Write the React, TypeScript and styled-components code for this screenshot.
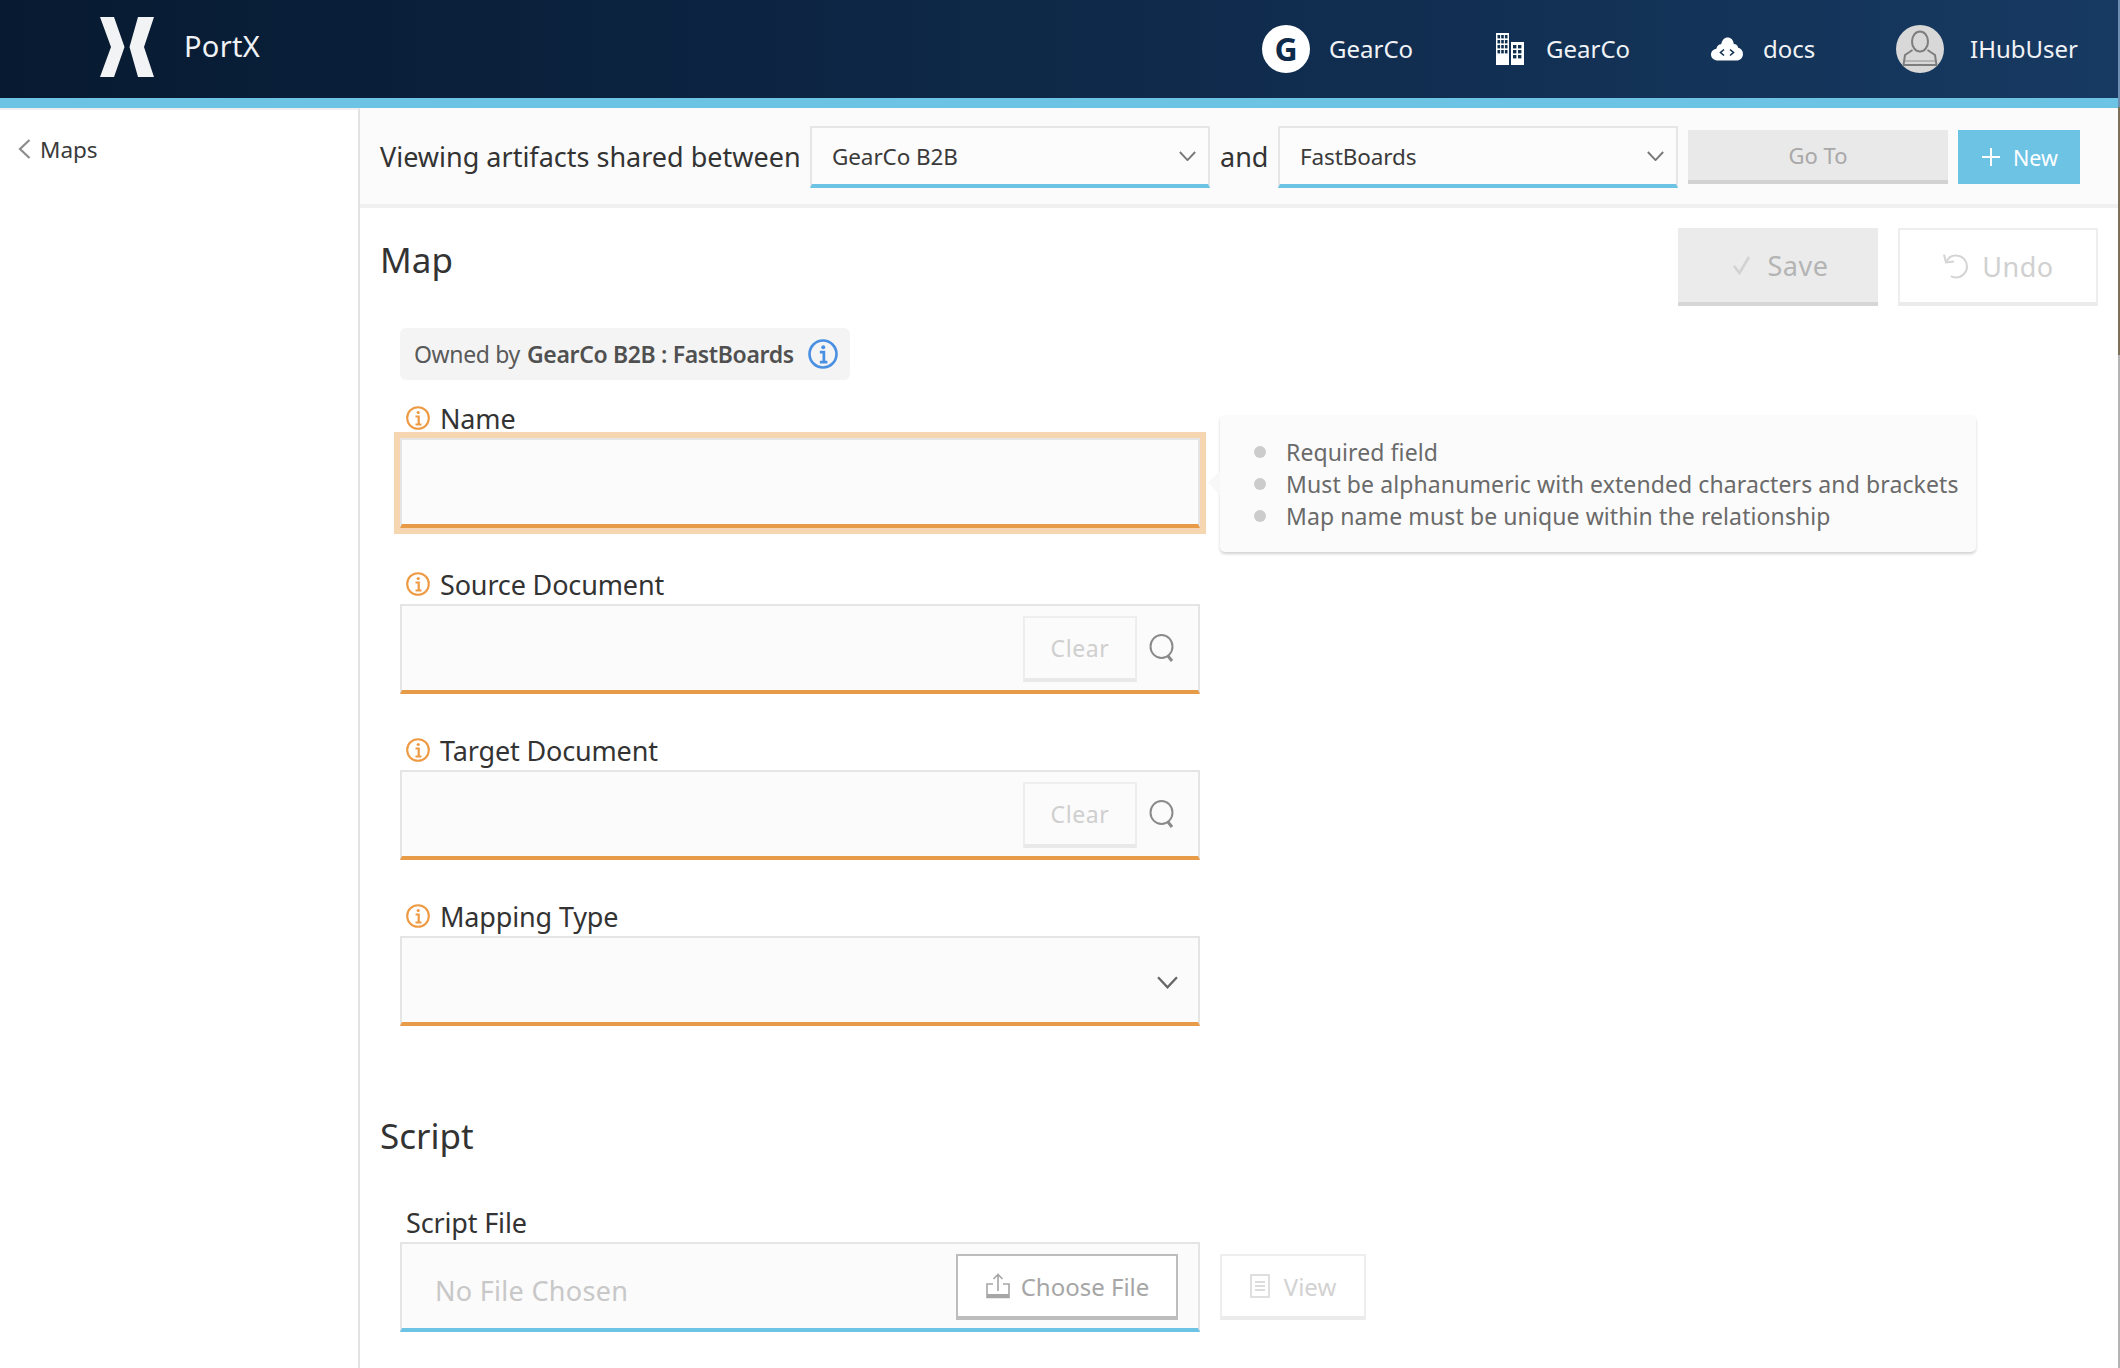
import React from 'react'
import styled, { createGlobalStyle } from 'styled-components'

const GlobalStyle = createGlobalStyle`
  html, body {
    margin: 0;
    padding: 0;
    background: #fff;
  }
  body {
    font-family: "Noto Sans", "Open Sans", sans-serif;
    color: #333;
  }
  * {
    box-sizing: border-box;
  }
`

const Page = styled.div`
  position: relative;
  width: 2120px;
  height: 1368px;
  overflow: hidden;
  display: flex;
  flex-direction: column;

  /* sliver of the desktop behind the browser window */
  &::after {
    content: '';
    position: absolute;
    top: 0;
    right: 0;
    bottom: 0;
    width: 2px;
    background: linear-gradient(180deg, #6f8fb2 0, #6f8fb2 107px, #7d6f58 107px, #7d6f58 355px, #b4b4b4 355px);
  }
`

const Header = styled.header`
  flex: none;
  height: 108px;
  border-bottom: 10px solid #6cc3e4;
  background: linear-gradient(90deg, #071a31 0%, #0f2a4b 55%, #173a62 100%);
  display: flex;
  align-items: center;
  color: #f0f2f5;
`

const LogoBox = styled.div`
  margin-left: 100px;
  width: 84px;
  height: 60px;
  flex: none;
  margin-top: -4px;
`

const Brand = styled.div`
  font-size: 29px;
  flex: 1;
  margin-top: -7px;
  letter-spacing: 0.3px;
`

const NavItem = styled.div<{ $width: number }>`
  display: flex;
  align-items: center;
  flex: none;
  width: ${(p) => p.$width}px;
  height: 48px;
  font-size: 24px;
  line-height: 46px;
`

const NavIcon = styled.span<{ $width: number }>`
  display: flex;
  align-items: center;
  flex: none;
  width: ${(p) => p.$width}px;
`

const CircleG = styled.span`
  width: 48px;
  height: 48px;
  border-radius: 50%;
  background: #fff;
  color: #0f2b4c;
  font-size: 32px;
  font-weight: 700;
  display: flex;
  align-items: center;
  justify-content: center;
`

const Body = styled.div`
  flex: 1;
  display: flex;
  min-height: 0;
`

const Sidebar = styled.aside`
  flex: none;
  width: 360px;
  border-right: 2px solid #e2e2e2;
  border-top: 2px solid #efefef;
  padding: 25px 0 0 18px;
`

const BackLink = styled.div`
  display: flex;
  align-items: center;
  gap: 9px;
  height: 28px;
  font-size: 22.5px;
  color: #3a3a3a;
`

const Main = styled.main`
  flex: 1;
  min-width: 0;
`

const Toolbar = styled.div`
  height: 100px;
  background: #fbfbfb;
  border-bottom: 4px solid #f0f0f0;
  padding-left: 20px;
  display: flex;
  align-items: center;
  font-size: 27px;
  color: #333;
`

const ToolbarText = styled.span<{ $width: number; $inset?: number }>`
  flex: none;
  width: ${(p) => p.$width}px;
  padding-left: ${(p) => p.$inset ?? 0}px;
  white-space: nowrap;
`

const SelectBox = styled.div`
  flex: none;
  width: 400px;
  height: 62px;
  margin-top: 2px;
  border: 2px solid #e6e6e6;
  border-bottom: 4px solid #6cc3e4;
  padding: 0 12px 0 20px;
  display: flex;
  align-items: center;
  justify-content: space-between;
  font-size: 22.5px;
  letter-spacing: -0.1px;
  color: #3a3a3a;
  background: #fcfcfc;
`

const GoToButton = styled.div`
  flex: none;
  width: 260px;
  height: 54px;
  margin: 2px 0 0 10px;
  background: #e9e9e9;
  border-bottom: 4px solid #d2d2d2;
  color: #a8a8a8;
  font-size: 22px;
  display: flex;
  align-items: center;
  justify-content: center;
`

const NewButton = styled.div`
  flex: none;
  width: 122px;
  height: 54px;
  margin: 2px 0 0 10px;
  padding-left: 2px;
  background: #6cc3e4;
  color: #fff;
  font-size: 21.5px;
  display: flex;
  align-items: center;
  justify-content: center;
  gap: 13px;
`

const Content = styled.div`
  padding: 20px 22px 0 20px;
`

const SectionHead = styled.div`
  display: flex;
  align-items: flex-start;
  justify-content: space-between;
  height: 78px;
`

const SectionTitle = styled.h2`
  margin: 0;
  font-weight: 400;
  font-size: 35px;
  line-height: 48px;
  color: #333;
`

const MapTitle = styled(SectionTitle)`
  margin-top: 8px;
`

const HeadButtons = styled.div`
  display: flex;
  gap: 20px;
`

const BigButton = styled.div<{ $filled?: boolean }>`
  width: 200px;
  height: 78px;
  display: flex;
  align-items: center;
  justify-content: center;
  gap: ${(p) => (p.$filled ? 16 : 12)}px;
  padding-left: ${(p) => (p.$filled ? 4 : 0)}px;
  font-size: 27px;
  letter-spacing: 0.5px;
  color: ${(p) => (p.$filled ? '#b4b4b4' : '#d0d0d0')};
  background: ${(p) => (p.$filled ? '#ebebeb' : '#fff')};
  border: ${(p) => (p.$filled ? '0' : '2px solid #eeeeee')};
  border-bottom: 4px solid ${(p) => (p.$filled ? '#d6d6d6' : '#ebebeb')};
`

const FormColumn = styled.div`
  margin: 22px 0 0 20px;
  width: 800px;
`

const OwnedTag = styled.div`
  display: flex;
  align-items: center;
  width: 450px;
  height: 52px;
  padding-left: 14px;
  border-radius: 6px;
  background: #f4f4f4;
  font-size: 23px;
  letter-spacing: -0.35px;
  color: #5a5a5a;
  white-space: nowrap;

  b {
    margin: 0 0 0 7px;
    font-weight: 600;
    color: #505050;
  }

  svg {
    margin-left: 14px;
  }
`

const Field = styled.div<{ $gap?: number }>`
  position: relative;
  margin-top: ${(p) => p.$gap ?? 48}px;
`

const Label = styled.label`
  display: flex;
  align-items: center;
  gap: 10px;
  height: 28px;
  padding: 0 0 12px 6px;
  font-size: 27px;
  letter-spacing: -0.15px;
  color: #333;
  white-space: nowrap;
`

const InputBox = styled.div<{ $focus?: boolean; $blue?: boolean }>`
  height: 90px;
  background: #fbfbfb;
  border: 2px solid #e5e5e5;
  border-bottom: 4px solid ${(p) => (p.$blue ? '#6cc3e4' : '#e79a47')};
  display: flex;
  align-items: center;
  justify-content: flex-end;
  box-shadow: ${(p) => (p.$focus ? '0 0 0 6px #f5d6b0' : 'none')};
`

const ClearButton = styled.div`
  flex: none;
  width: 114px;
  height: 66px;
  margin-right: 12px;
  margin-top: 2px;
  border: 2px solid #eeeeee;
  border-bottom: 4px solid #e9e9e9;
  display: flex;
  align-items: center;
  justify-content: center;
  font-size: 23px;
  color: #cfcfcf;
  letter-spacing: 0.6px;
`

const SearchSlot = styled.div`
  flex: none;
  width: 49px;
  display: flex;
`

const ChevronSlot = styled.div`
  margin: 6px 20px 0 0;
  display: flex;
`

const Tooltip = styled.div`
  position: absolute;
  left: 820px;
  top: 5px;
  width: 756px;
  height: 137px;
  background: #fbfbfb;
  border-radius: 5px;
  box-shadow: 0 2px 3px rgba(0, 0, 0, 0.18);
  padding: 21px 0 0 34px;

  &::before {
    content: '';
    position: absolute;
    left: -12px;
    top: 56px;
    border-style: solid;
    border-width: 12px 12px 12px 0;
    border-color: transparent #f8f8f8 transparent transparent;
  }
`

const TipLine = styled.div`
  display: flex;
  align-items: center;
  height: 32px;
  font-size: 23px;
  letter-spacing: 0.1px;
  color: #6a6a6a;
  white-space: nowrap;

  &::before {
    content: '';
    flex: none;
    width: 12px;
    height: 12px;
    border-radius: 50%;
    background: #cccccc;
    margin-right: 20px;
  }
`

const ScriptTitle = styled(SectionTitle)`
  margin: 86px 0 0 -20px;
`

const FileRow = styled.div`
  display: flex;
  align-items: center;
`

const FileBox = styled(InputBox)`
  flex: none;
  width: 800px;
  justify-content: space-between;
  padding: 0 20px 0 33px;
`

const NoFile = styled.span`
  font-size: 27px;
  letter-spacing: 0.3px;
  color: #c8c8c8;
  margin-top: 8px;
`

const ChooseButton = styled.div`
  width: 222px;
  height: 66px;
  margin-top: 2px;
  border: 2px solid #bdbdbd;
  border-bottom: 4px solid #bdbdbd;
  background: #fff;
  display: flex;
  align-items: center;
  justify-content: center;
  gap: 10px;
  font-size: 24px;
  color: #a6a6a6;
`

const ViewButton = styled.div`
  flex: none;
  width: 146px;
  height: 66px;
  margin-left: 20px;
  border: 2px solid #eeeeee;
  border-bottom: 4px solid #ebebeb;
  display: flex;
  align-items: center;
  justify-content: center;
  gap: 14px;
  font-size: 24px;
  color: #d2d2d2;
`

const Logo = () => (
  <svg width="54" height="60" viewBox="0 0 54 60" fill="#f2f3f5">
    <polygon points="0,0 14,0 24.5,30 14,60 0,60 11,30" />
    <polygon points="54,0 38,0 29.5,30 38,60 54,60 44,30" />
  </svg>
)

const Building = () => (
  <svg width="29" height="32" viewBox="0 0 29 32">
    <rect x="0" y="0" width="13" height="32" fill="#fff" />
    <rect x="15" y="9" width="13" height="23" fill="#fff" />
    {[2, 7, 12, 17].map((y) =>
      [1.5, 5.2, 8.9].map((x) => (
        <rect key={`${x}-${y}`} x={x} y={y} width="2.6" height="3.4" fill="#10304f" />
      )),
    )}
    {[12, 17, 22].map((y) =>
      [17, 22].map((x) => <rect key={`${x}-${y}`} x={x} y={y} width="3.4" height="3.4" fill="#10304f" />),
    )}
  </svg>
)

const CloudCode = () => (
  <svg width="32" height="24" viewBox="0 0 32 24">
    <path
      d="M7 23.5C3 23.5 0 21 0 17.5c0-3 2.2-5.4 5.4-5.8C6 8.6 8 7 10.2 7.2 11 3 13.5 0.5 16.5 0.5c3.5 0 6 2.7 6.3 6.5 2.5 0 4 1.5 4.4 3.8 2.9 0.7 4.8 3.2 4.8 6.2 0 3.8-2.8 6.5-6.5 6.5z"
      fill="#fff"
    />
    <path d="M13 12.5L9.5 15.5L13 18.5M19 12.5L22.5 15.5L19 18.5" fill="none" stroke="#10304f" strokeWidth="1.6" />
  </svg>
)

const Avatar = () => (
  <svg width="48" height="48" viewBox="0 0 48 48">
    <circle cx="24" cy="24" r="24" fill="#d8d8d8" />
    <ellipse cx="24" cy="16.5" rx="8" ry="10" fill="none" stroke="#7d7d7d" strokeWidth="2" />
    <path d="M16.5 25L9 30L7.5 40H40.5L39 30L31.5 25" fill="none" stroke="#7d7d7d" strokeWidth="2" />
    <path d="M9 36H39" stroke="#a8a8a8" strokeWidth="1.5" />
  </svg>
)

const ChevronDown = ({ size = 17, color = '#777' }: { size?: number; color?: string }) => (
  <svg width={size} height={size * 0.62} viewBox="0 0 20 12" fill="none" stroke={color} strokeWidth="2.2">
    <path d="M1 1L10 10.5L19 1" />
  </svg>
)

const ChevronLeft = () => (
  <svg width="13" height="20" viewBox="0 0 13 20" fill="none" stroke="#8c8c8c" strokeWidth="2.2">
    <path d="M11.5 1L2 10L11.5 19" />
  </svg>
)

const InfoIcon = ({ color, size = 24 }: { color: string; size?: number }) => (
  <svg width={size} height={size} viewBox="0 0 24 24" fill="none" stroke={color} style={{ flex: 'none' }}>
    <circle cx="12" cy="12" r="10.8" strokeWidth="2.1" />
    <path d="M9.5 10.5H12.7V18.5M9.5 18.5H15.5" strokeWidth="2.2" />
    <circle cx="12.2" cy="6.5" r="1.6" fill={color} stroke="none" />
  </svg>
)

const SearchIcon = () => (
  <svg width="26" height="28" viewBox="0 0 26 28" fill="none" stroke="#8a8a8a" strokeWidth="2">
    <ellipse cx="12.5" cy="12.5" rx="11" ry="11.5" />
    <path d="M19 22L23 27" strokeWidth="3" />
  </svg>
)

const CheckIcon = () => (
  <svg width="20" height="20" viewBox="0 0 20 20" fill="none" stroke="#d2d2d2" strokeWidth="2.6">
    <path d="M2 11L7.5 18L17 2" />
  </svg>
)

const UndoIcon = () => (
  <svg width="28" height="26" viewBox="0 0 28 26" fill="none" stroke="#d4d4d4" strokeWidth="2">
    <path d="M5 8C7 3.5 11 2 15 2.5C21 3 25 8 25 13.5C25 19.5 20 24.5 14 24.5C12 24.5 10 24 9 23" />
    <path d="M2 1.5L4 9.5L12 8.5" />
  </svg>
)

const PlusIcon = () => (
  <svg width="18" height="18" viewBox="0 0 18 18" stroke="#fff" strokeWidth="2">
    <path d="M9 0V18M0 9H18" />
  </svg>
)

const UploadIcon = () => (
  <svg width="26" height="26" viewBox="0 0 26 26" fill="none" stroke="#a6a6a6" strokeWidth="1.6">
    <path d="M8 11H2V24.5H24V11H18" />
    <path d="M13 18V1.5M8.5 6L13 1.5L17.5 6" />
    <path d="M2 22.5H24" strokeWidth="3" />
  </svg>
)

const DocIcon = () => (
  <svg width="20" height="24" viewBox="0 0 20 24" fill="none" stroke="#dcdcdc" strokeWidth="1.8">
    <rect x="1" y="1" width="18" height="22" />
    <path d="M5 8H15M5 12H15M5 16H15" />
  </svg>
)

const fields = ['Source Document', 'Target Document']

export default function App() {
  return (
    <Page>
      <GlobalStyle />
      <Header>
        <LogoBox>
          <Logo />
        </LogoBox>
        <Brand>PortX</Brand>
        <NavItem $width={234}>
          <NavIcon $width={67}>
            <CircleG>G</CircleG>
          </NavIcon>
          GearCo
        </NavItem>
        <NavItem $width={215}>
          <NavIcon $width={50}>
            <Building />
          </NavIcon>
          GearCo
        </NavItem>
        <NavItem $width={185}>
          <NavIcon $width={52}>
            <CloudCode />
          </NavIcon>
          docs
        </NavItem>
        <NavItem $width={224}>
          <NavIcon $width={74}>
            <Avatar />
          </NavIcon>
          IHubUser
        </NavItem>
      </Header>
      <Body>
        <Sidebar>
          <BackLink>
            <ChevronLeft />
            Maps
          </BackLink>
        </Sidebar>
        <Main>
          <Toolbar>
            <ToolbarText $width={430}>Viewing artifacts shared between</ToolbarText>
            <SelectBox>
              GearCo B2B
              <ChevronDown />
            </SelectBox>
            <ToolbarText $width={68} $inset={10}>
              and
            </ToolbarText>
            <SelectBox>
              FastBoards
              <ChevronDown />
            </SelectBox>
            <GoToButton>Go To</GoToButton>
            <NewButton>
              <PlusIcon />
              New
            </NewButton>
          </Toolbar>
          <Content>
            <SectionHead>
              <MapTitle>Map</MapTitle>
              <HeadButtons>
                <BigButton $filled>
                  <CheckIcon />
                  Save
                </BigButton>
                <BigButton>
                  <UndoIcon />
                  Undo
                </BigButton>
              </HeadButtons>
            </SectionHead>
            <FormColumn>
              <OwnedTag>
                Owned by <b>GearCo B2B : FastBoards</b>
                <InfoIcon color="#4a90e2" size={30} />
              </OwnedTag>
              <Field $gap={30}>
                <Label>
                  <InfoIcon color="#ee9a43" />
                  Name
                </Label>
                <InputBox $focus />
                <Tooltip>
                  <TipLine>Required field</TipLine>
                  <TipLine>Must be alphanumeric with extended characters and brackets</TipLine>
                  <TipLine>Map name must be unique within the relationship</TipLine>
                </Tooltip>
              </Field>
              {fields.map((name) => (
                <Field key={name}>
                  <Label>
                    <InfoIcon color="#ee9a43" />
                    {name}
                  </Label>
                  <InputBox>
                    <ClearButton>Clear</ClearButton>
                    <SearchSlot>
                      <SearchIcon />
                    </SearchSlot>
                  </InputBox>
                </Field>
              ))}
              <Field>
                <Label>
                  <InfoIcon color="#ee9a43" />
                  Mapping Type
                </Label>
                <InputBox>
                  <ChevronSlot>
                    <ChevronDown size={21} color="#666" />
                  </ChevronSlot>
                </InputBox>
              </Field>
              <ScriptTitle>Script</ScriptTitle>
              <Field $gap={54}>
                <Label>Script File</Label>
                <FileRow>
                  <FileBox $blue>
                    <NoFile>No File Chosen</NoFile>
                    <ChooseButton>
                      <UploadIcon />
                      Choose File
                    </ChooseButton>
                  </FileBox>
                  <ViewButton>
                    <DocIcon />
                    View
                  </ViewButton>
                </FileRow>
              </Field>
            </FormColumn>
          </Content>
        </Main>
      </Body>
    </Page>
  )
}
